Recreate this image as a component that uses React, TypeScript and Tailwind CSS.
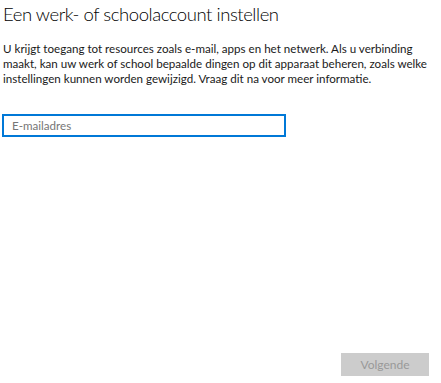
export default function App() {
  return (
    <div
      className="relative w-[441px] h-[383px] bg-white text-black"
      style={{ fontFamily: 'Lato, "Open Sans", sans-serif' }}
    >
      <div className="flex flex-col pl-[3px] pt-[1px]">
        <h1 className="text-[18.5px] leading-[26px] font-light tracking-[-0.45px] text-black">
          Een werk- of schoolaccount instellen
        </h1>
        <p className="mt-[14px] text-[11.6px] leading-[15px] text-[#1a1a1a] whitespace-nowrap">
          U krijgt toegang tot resources zoals e-mail, apps en het netwerk. Als u verbinding
          <br />
          maakt, kan uw werk of school bepaalde dingen op dit apparaat beheren, zoals welke
          <br />
          instellingen kunnen worden gewijzigd. Vraag dit na voor meer informatie.
        </p>
        <div className="mt-[28px] ml-[-1px] w-[284px] h-[23px] border-2 border-[#0078d7] flex items-center px-[8px]">
          <span className="text-[11.6px] text-[#767676]">E-mailadres</span>
        </div>
      </div>
      <div className="absolute left-[341px] top-[353px] w-[88px] h-[23px] bg-[#cccccc] flex items-center justify-center">
        <span className="text-[12px] text-[#999999]">Volgende</span>
      </div>
    </div>
  )
}
